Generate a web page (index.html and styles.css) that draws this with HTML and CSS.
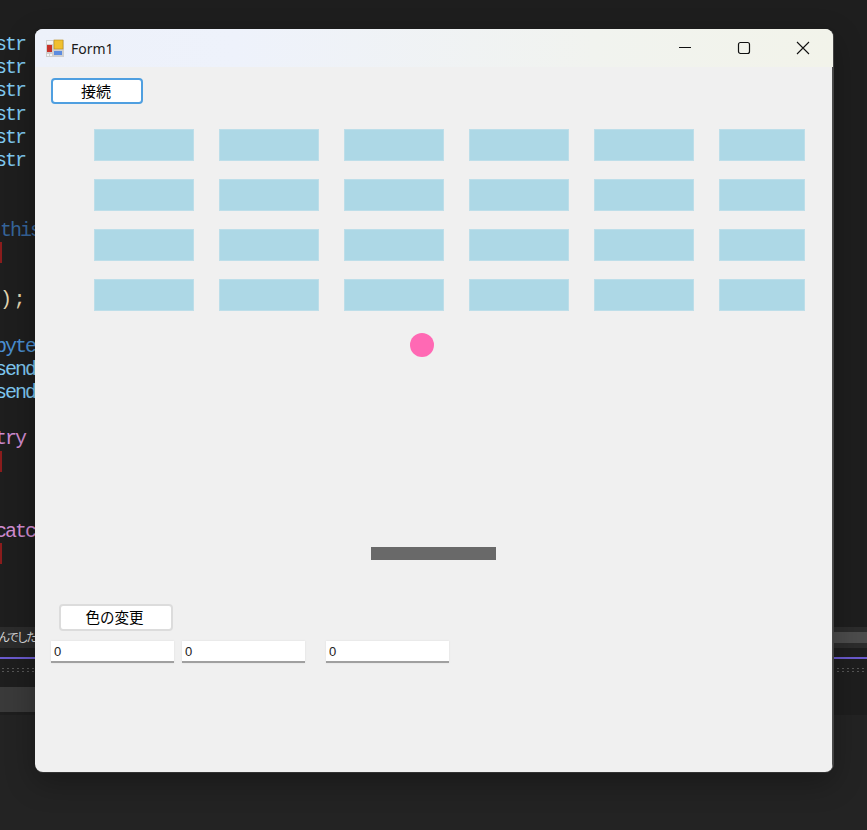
FILE: index.html
```html
<!DOCTYPE html>
<html lang="en">
<head>
    <meta charset="UTF-8">
    <meta name="viewport" content="width=device-width, initial-scale=1.0">
    <title>Form1</title>
    <link rel="stylesheet" href="styles.css">
</head>
<body>
    <!-- Editor behind the window -->
    <div class="editor">
        <div class="code">
            <div class="type">str</div>
            <div class="type">str</div>
            <div class="type">str</div>
            <div class="type">str</div>
            <div class="type">str</div>
            <div class="type">str</div>
            <div>&nbsp;</div>
            <div>&nbsp;</div>
            <div class="this shift">this</div>
            <div class="brace">{</div>
            <div>&nbsp;</div>
            <div class="plain shift">);</div>
            <div>&nbsp;</div>
            <div class="kw">byte</div>
            <div class="type">send</div>
            <div class="type">send</div>
            <div>&nbsp;</div>
            <div class="ctl">try</div>
            <div class="brace">{</div>
            <div>&nbsp;</div>
            <div>&nbsp;</div>
            <div class="ctl">catch</div>
            <div class="brace">{</div>
        </div>
        <div class="output-bar">
            <div class="output-text">んでした</div>
            <div class="output-scroll"></div>
        </div>
        <div class="accent-line"></div>
        <div class="dots"></div>
        <div class="tab-strip"></div>
    </div>

    <!-- Form window -->
    <div class="window">
        <div class="titlebar">
            <svg class="app-icon" width="18" height="18" viewBox="0 0 18 18">
                <rect x="0" y="1" width="18" height="17" fill="#cfcfcf"/>
                <rect x="1" y="2" width="6" height="3" fill="#f4f4f4"/>
                <rect x="8" y="1" width="9" height="9" fill="#f0c030" stroke="#b98a1a" stroke-width="0.6"/>
                <rect x="1" y="6" width="5" height="7" fill="#c8322a"/>
                <rect x="8" y="12" width="8" height="4" fill="#5c8ce0"/>
                <rect x="1" y="15" width="2" height="2" fill="#f4f4f4"/>
                <rect x="4" y="15" width="2" height="2" fill="#f4f4f4"/>
            </svg>
            <span class="title-text">Form1</span>
            <div class="controls">
                <svg class="ctrl" width="14" height="14" viewBox="0 0 14 14"><path d="M1 6.5h12" stroke="#111" fill="none"/></svg>
                <svg class="ctrl" width="14" height="14" viewBox="0 0 14 14"><rect x="1.5" y="1.5" width="11" height="11" rx="2" stroke="#111" stroke-width="1.2" fill="none"/></svg>
                <svg class="ctrl" width="14" height="14" viewBox="0 0 14 14"><path d="M1 1l12 12M13 1L1 13" stroke="#111" stroke-width="1.1" fill="none"/></svg>
            </div>
        </div>
        <div class="client">
            <button class="btn btn-focus">接続</button>

            <!-- Game field -->
            <div class="field">
                <div class="bricks">
                    <div class="brick"></div><div class="brick"></div><div class="brick"></div><div class="brick"></div><div class="brick"></div><div class="brick"></div>
                    <div class="brick"></div><div class="brick"></div><div class="brick"></div><div class="brick"></div><div class="brick"></div><div class="brick"></div>
                    <div class="brick"></div><div class="brick"></div><div class="brick"></div><div class="brick"></div><div class="brick"></div><div class="brick"></div>
                    <div class="brick"></div><div class="brick"></div><div class="brick"></div><div class="brick"></div><div class="brick"></div><div class="brick"></div>
                </div>
                <div class="ball"></div>
                <div class="paddle"></div>
            </div>

            <button class="btn btn-color">色の変更</button>
            <div class="inputs">
                <input class="num" type="text" value="0">
                <input class="num" type="text" value="0">
                <input class="num num-last" type="text" value="0">
            </div>
        </div>
    </div>
</body>
</html>
```

FILE: styles.css
```css
/* Global Styles */
body {
    margin: 0;
    width: 867px;
    height: 830px;
    position: relative;
    overflow: hidden;
    background-color: #232323;
    font-family: 'Noto Sans', 'Noto Sans CJK JP', sans-serif;
}

/* Editor behind the window */
.editor {
    background-color: #1e1e1e;
    height: 715px;
}
.code {
    height: 594px;
    padding-top: 33px;
    font-family: 'Liberation Mono', monospace;
    font-size: 20px;
    line-height: 23.2px;
    letter-spacing: -2px;
    white-space: nowrap;
    overflow: hidden;
    margin-left: -5px;
    color: #d4d4d4;
}
.code .type { color: #7fc8f0; }
.code .this { color: #36659a; }
.code .kw { color: #4a8fd0; }
.code .ctl { color: #d08cd0; }
.code .plain { color: #e2d6b0; letter-spacing: 1.5px; }
.code .shift { padding-left: 5px; }
.code .brace {
    width: 2px;
    height: 21px;
    margin: 0 0 2.2px 5px;
    overflow: hidden;
    background-color: #8a1c1c;
    color: #8a1c1c;
}

.output-bar {
    height: 21px;
    display: flex;
    background-color: #2c2c2c;
}
.output-text {
    width: 60px;
    font-size: 12px;
    letter-spacing: -2.5px;
    line-height: 21px;
    color: #d8d8d8;
    margin-left: -2px;
    white-space: nowrap;
}
.output-scroll {
    flex: 1;
    height: 11px;
    margin-top: 5px;
    background-color: #4c4c4c;
}
.accent-line {
    height: 2px;
    margin-top: 9px;
    background-color: #6a5acd;
}
.dots {
    height: 6px;
    margin-top: 8px;
    background-image: radial-gradient(#555 1px, transparent 1px);
    background-size: 5px 3px;
}
.tab-strip {
    height: 25px;
    width: 35px;
    margin-top: 14px;
    background-color: #3a3a3a;
}

/* Form window */
.window {
    position: absolute;
    left: 35px;
    top: 29px;
    width: 798px;
    height: 743px;
    display: flex;
    flex-direction: column;
    border-radius: 8px;
    overflow: hidden;
    background-color: #f0f0f0;
    box-shadow: 1px 0 0 #444, 0 1px 0 #333, 0 10px 30px rgba(0, 0, 0, 0.3);
}
.titlebar {
    height: 38px;
    flex-shrink: 0;
    display: flex;
    align-items: center;
    padding-left: 11px;
    background: linear-gradient(90deg, #edf1fa 0%, #eef2fb 25%, #f1f3ef 70%, #f2f3ea 100%);
}
.app-icon {
    flex-shrink: 0;
}
.title-text {
    margin-left: 7px;
    font-size: 14px;
    color: #1a1a1a;
}
.controls {
    margin-left: auto;
    display: flex;
    gap: 45px;
    padding-right: 23px;
}
.client {
    flex: 1;
    padding: 11px 0 0 16px;
    border-right: 1px solid #4a4a4a;
}

/* Buttons */
.btn {
    display: block;
    padding: 0 0 3px;
    background-color: #fff;
    font-family: 'Noto Sans CJK JP', sans-serif;
    color: #000;
    box-sizing: border-box;
}
.btn-focus {
    width: 92px;
    height: 26px;
    font-size: 15px;
    padding-right: 2px;
    border: 2px solid #4f9fe0;
    border-radius: 4px;
}
.btn-color {
    width: 114px;
    height: 27px;
    margin-left: 8px;
    font-size: 14.5px;
    padding-right: 3px;
    border: 2px solid #dcdcdc;
    border-radius: 4px;
}

/* Game field */
.field {
    position: relative;
    height: 475px;
    margin-top: 25px;
    padding-left: 43px;
}
.bricks {
    display: grid;
    grid-template-columns: repeat(5, 100px) 86px;
    grid-auto-rows: 32px;
    column-gap: 25px;
    row-gap: 18px;
}
.brick {
    box-sizing: border-box;
    background-color: #add8e6;
    border: 1px solid #bddee9;
}
.ball {
    position: absolute;
    left: 359px;
    top: 204px;
    width: 24px;
    height: 24px;
    border-radius: 50%;
    background-color: #ff69b4;
}
.paddle {
    position: absolute;
    left: 320px;
    top: 418px;
    width: 125px;
    height: 13px;
    background-color: #696969;
}

/* Text boxes */
.inputs {
    display: flex;
    gap: 8px;
    margin-top: 10px;
}
.num {
    width: 123px;
    height: 22px;
    box-sizing: border-box;
    padding: 0 0 0 3px;
    border: none;
    border-bottom: 2px solid #a0a0a0;
    box-shadow: 0 0 2px rgba(0, 0, 0, 0.08);
    background-color: #fff;
    font-family: 'Liberation Sans', sans-serif;
    font-size: 13px;
    color: #222;
    outline: none;
}
.num-last {
    margin-left: 13px;
}
```
